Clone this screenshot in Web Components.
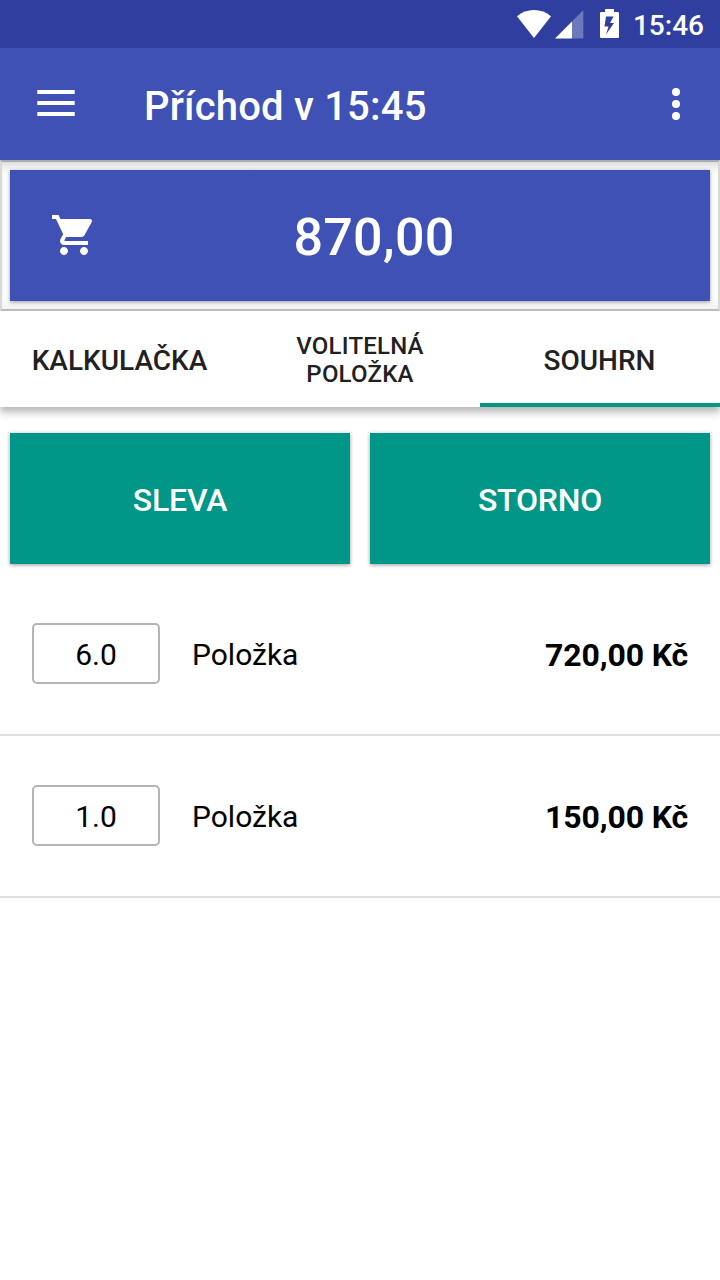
<!DOCTYPE html>
<html lang="cs">
<head>
<meta charset="utf-8">
<title>Příchod v 15:45</title>
<style>
  html, body { margin: 0; height: 100%; overflow: hidden; }
  body {
    background: #fff;
    font-family: Roboto, "Liberation Sans", sans-serif;
    color: #000;
  }
</style>
</head>
<body>
<pos-screen>
  <status-bar slot="top" time="15:46"></status-bar>
  <app-bar slot="top">Příchod v 15:45</app-bar>
  <cart-total>870,00</cart-total>
  <tab-bar>
    <tab-item>Kalkulačka</tab-item>
    <tab-item small>Volitelná položka</tab-item>
    <tab-item selected>Souhrn</tab-item>
  </tab-bar>
  <action-row>
    <action-button>Sleva</action-button>
    <action-button>Storno</action-button>
  </action-row>
  <order-item qty="6.0" price="720,00 Kč">Položka</order-item>
  <order-item qty="1.0" price="150,00 Kč">Položka</order-item>
</pos-screen>

<script>
(function () {
  'use strict';

  // Registers an element whose shadow root is filled from render(host).
  function define(name, css, render) {
    customElements.define(name, class extends HTMLElement {
      connectedCallback() {
        if (this.shadowRoot) return;
        var root = this.attachShadow({ mode: 'open' });
        root.innerHTML = '<style>* { box-sizing: border-box; } svg { display: block; }' + css + '</style>' + render(this);
      }
    });
  }

  define('pos-screen', `
    :host { display: flex; flex-direction: column; width: 720px; height: 1280px; }
  `, function () {
    return '<slot name="top"></slot><slot></slot>';
  });

  define('status-bar', `
    :host {
      box-sizing: border-box;
      display: flex;
      align-items: center;
      justify-content: flex-end;
      height: 48px;
      padding-right: 16px;
      background: #303f9f;
      color: #fff;
      font-size: 28px;
      font-weight: 500;
      line-height: 48px;
    }
    .signal { margin-left: 4px; }
    .battery { margin: 0 14px 0 16px; }
    .time { padding-top: 3px; }
  `, function (host) {
    return `
      <svg width="34" height="48" viewBox="0 0 34 48" fill="#fff">
        <path d="M17 38 0 16.3C5 12 10.5 10 17 10s12 2 17 6.300z"/>
      </svg>
      <svg class="signal" width="29" height="48" viewBox="0 0 29 48" fill="#fff">
        <path fill-opacity=".3" d="M17 21.500 28.300 10v28.500H17z"/>
        <path d="M0 38.500 17 21.500v17z"/>
      </svg>
      <svg class="battery" width="19" height="48" viewBox="0 0 19 48" fill="#fff">
        <path fill-rule="evenodd" d="M5 9h9v3h3.700q1.300 0 1.300 1.300v23.400q0 1.300-1.300 1.300H1.300Q0 38 0 36.700V13.300Q0 12 1.300 12H5zM6 16.500 4.500 26.500H8.500L6 34.500 14 23H10L13.500 16.500z"/>
      </svg>
      <span class="time">${host.getAttribute('time')}</span>`;
  });

  define('app-bar', `
    :host {
      box-sizing: border-box;
      display: flex;
      align-items: center;
      height: 112px;
      padding: 0 32px;
      background: #3f51b5;
      color: #fff;
    }
    h1 {
      flex: 1;
      margin: 0 0 0 64px;
      padding-top: 6px;
      font-size: 40px;
      font-weight: 500;
      letter-spacing: .2px;
      line-height: 48px;
    }
  `, function () {
    return `
      <svg width="48" height="112" viewBox="0 0 48 112" fill="#fff">
        <path d="M5.300 42h37.400v4H5.300zm0 11h37.400v4H5.300zm0 11h37.400v4H5.300z"/>
      </svg>
      <h1><slot></slot></h1>
      <svg width="24" height="112" viewBox="0 0 24 112" fill="#fff">
        <circle cx="12" cy="44" r="4"/><circle cx="12" cy="56" r="4"/><circle cx="12" cy="68" r="4"/>
      </svg>`;
  });

  define('cart-total', `
    :host {
      box-sizing: border-box;
      display: block;
      height: 151px;
      padding: 8px;
      border: 2px solid;
      border-color: #acacac #d9d9d9 #bcbcbc;
      background:
        linear-gradient(#dedede, #f0f0f0 5px, rgba(245, 245, 245, 0) 12px),
        linear-gradient(to right, #f6f6f6, transparent 4px),
        linear-gradient(to top, #f2f2f2, #fafafa 8px, transparent 12px),
        #fff;
    }
    .card {
      display: grid;
      grid-template-columns: 88px 1fr 60px;
      align-items: center;
      height: 131px;
      background: #3f51b5;
      box-shadow: 0 1px 4px rgba(0, 0, 0, .4);
      color: #fff;
    }
    svg { margin: 0 0 1px 40px; }
    .sum {
      padding-top: 5px;
      font-size: 52px;
      font-weight: 500;
      letter-spacing: .3px;
      line-height: 60px;
      text-align: center;
    }
  `, function () {
    return `
      <div class="card">
        <svg width="48" height="48" viewBox="0 0 24 24" fill="#fff">
          <path d="M7 18c-1.100 0-1.990.9-1.990 2S5.900 22 7 22s2-.9 2-2-.9-2-2-2zM1 2v2h2l3.600 7.590-1.350 2.450c-.16.28-.25.61-.25.960 0 1.100.9 2 2 2h12v-2H7.420c-.14 0-.25-.11-.25-.25l.03-.12.9-1.630h7.450c.75 0 1.410-.41 1.750-1.030l3.580-6.490c.08-.14.12-.31.12-.48 0-.55-.45-1-1-1H5.210l-.94-2H1zm16 16c-1.100 0-1.990.9-1.990 2s.89 2 1.990 2 2-.9 2-2-.9-2-2-2z"/>
        </svg>
        <span class="sum"><slot></slot></span>
      </div>`;
  });

  define('tab-bar', `
    :host {
      display: grid;
      grid-template-columns: repeat(3, 1fr);
      height: 96px;
      background: #fff;
      box-shadow: 0 5px 8px rgba(0, 0, 0, .3);
      clip-path: inset(0 0 -24px);
    }
  `, function () {
    return '<slot></slot>';
  });

  define('tab-item', `
    :host {
      box-sizing: border-box;
      display: flex;
      align-items: center;
      justify-content: center;
      padding: 7px 25px 0 24px;
      border-bottom: 4px solid transparent;
      color: #212121;
      font-size: 28px;
      font-weight: 500;
      line-height: 32px;
      text-align: center;
      text-transform: uppercase;
    }
    :host([small]) { padding: 6px 24px 0; font-size: 24px; letter-spacing: .2px; line-height: 28px; }
    :host([selected]) { border-bottom-color: #009688; }
  `, function () {
    return '<span><slot></slot></span>';
  });

  define('action-row', `
    :host {
      display: grid;
      grid-template-columns: 1fr 1fr;
      gap: 20px;
      padding: 26px 10px 10px;
    }
  `, function () {
    return '<slot></slot>';
  });

  define('action-button', `
    :host {
      box-sizing: border-box;
      display: flex;
      align-items: center;
      justify-content: center;
      height: 131px;
      padding-top: 3px;
      background: #009688;
      box-shadow: 0 1px 4px rgba(0, 0, 0, .4);
      color: #fff;
      font-size: 32px;
      font-weight: 500;
      letter-spacing: -.2px;
      text-transform: uppercase;
    }
  `, function () {
    return '<span><slot></slot></span>';
  });

  define('order-item', `
    :host {
      box-sizing: border-box;
      display: grid;
      grid-template-columns: 128px 1fr auto;
      column-gap: 32px;
      align-items: center;
      height: 162px;
      padding: 0 32px 1px;
      border-bottom: 2px solid #e0e0e0;
      font-size: 30px;
    }
    .qty {
      height: 61px;
      border: 2px solid #b5b5b5;
      border-radius: 5px;
      line-height: 60px;
      text-align: center;
    }
    .name { padding-top: 2px; }
    .price { padding-top: 2px; font-size: 32px; font-weight: 700; letter-spacing: -.15px; }
  `, function (host) {
    return `
      <span class="qty">${host.getAttribute('qty')}</span>
      <span class="name"><slot></slot></span>
      <span class="price">${host.getAttribute('price')}</span>`;
  });
})();
</script>
</body>
</html>
